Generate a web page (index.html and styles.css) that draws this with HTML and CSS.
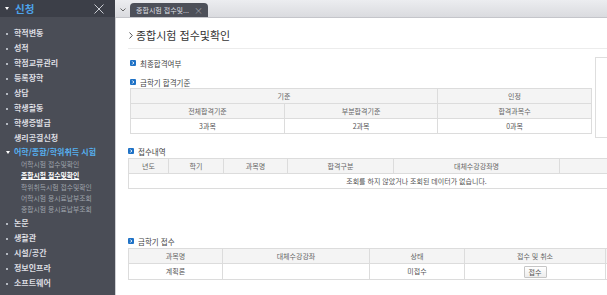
FILE: index.html
```html
<!DOCTYPE html>
<html lang="ko">
<head>
  <meta charset="UTF-8">
  <meta name="viewport" content="width=device-width, initial-scale=1.0">
  <title>종합시험 접수및확인</title>
  <link rel="stylesheet" href="styles.css">
</head>
<body>

<div class="layout">

  <!-- Left menu -->
  <aside class="sidebar">
    <div class="side-head">
      <span class="head-mark"></span>
      <span class="head-title">신청</span>
      <svg class="head-close" width="10" height="10" viewBox="0 0 10 10">
        <path d="M0.5 0.5 L9.5 9.5 M9.5 0.5 L0.5 9.5" stroke="#c9ccd2" stroke-width="1" fill="none"/>
      </svg>
    </div>
    <ul class="menu">
      <li class="menu-item">학적변동</li>
      <li class="menu-item">성적</li>
      <li class="menu-item">학점교류관리</li>
      <li class="menu-item">등록장학</li>
      <li class="menu-item">상담</li>
      <li class="menu-item">학생활동</li>
      <li class="menu-item">학생증발급</li>
      <li class="menu-item no-dot">생리공결신청</li>
      <li class="menu-item open">어학/종합/학위취득 시험</li>
      <li class="sub-item">어학시험 접수및확인</li>
      <li class="sub-item current">종합시험 접수및확인</li>
      <li class="sub-item">학위취득시험 접수및확인</li>
      <li class="sub-item">어학시험 응시료납부조회</li>
      <li class="sub-item">종합시험 응시료납부조회</li>
      <li class="menu-item">논문</li>
      <li class="menu-item">생활관</li>
      <li class="menu-item">시설/공간</li>
      <li class="menu-item">정보인프라</li>
      <li class="menu-item">소프트웨어</li>
    </ul>
  </aside>

  <main class="main">
    <!-- Tab bar -->
    <div class="tabbar">
      <svg class="tab-toggle" width="6" height="4" viewBox="0 0 6 4">
        <path d="M0.5 0.5 L3 3 L5.5 0.5" stroke="#666" stroke-width="1" fill="none"/>
      </svg>
      <div class="tab">
        <span class="tab-text">종합시험 접수및...</span>
        <span class="tab-close">×</span>
      </div>
    </div>

    <div class="content">
      <h2 class="page-title">
        <svg class="title-arrow" width="4" height="7" viewBox="0 0 4 7">
          <path d="M0.5 0.5 L3.3 3.5 L0.5 6.5" stroke="#555" stroke-width="1" fill="none"/>
        </svg>
        종합시험 접수및확인
      </h2>

      <!-- Summary -->
      <div class="summary">
        <div class="summary-main">
          <div class="sec-title first">
            <span class="sec-icon"><svg width="6" height="6" viewBox="0 0 6 6"><path d="M2.3 1.5 L3.8 3 L2.3 4.5" stroke="#fff" stroke-width="1" fill="none"/></svg></span>
            최종합격여부
          </div>
          <div class="sec-title">
            <span class="sec-icon"><svg width="6" height="6" viewBox="0 0 6 6"><path d="M2.3 1.5 L3.8 3 L2.3 4.5" stroke="#fff" stroke-width="1" fill="none"/></svg></span>
            금학기 합격기준
          </div>
          <table class="grid grid-criteria">
            <colgroup><col style="width:154px"><col style="width:153px"><col style="width:154px"></colgroup>
            <tr><th colspan="2">기준</th><th>인정</th></tr>
            <tr><th>전체합격기준</th><th>부분합격기준</th><th>합격과목수</th></tr>
            <tr><td>3과목</td><td>2과목</td><td>0과목</td></tr>
          </table>
        </div>
        <div class="photo-box"></div>
      </div>

      <!-- Receipt history -->
      <div class="section history">
        <div class="sec-title">
          <span class="sec-icon"><svg width="6" height="6" viewBox="0 0 6 6"><path d="M2.3 1.5 L3.8 3 L2.3 4.5" stroke="#fff" stroke-width="1" fill="none"/></svg></span>
          접수내역
        </div>
        <table class="grid grid-wide">
          <colgroup>
            <col style="width:40px"><col style="width:55px"><col style="width:64px">
            <col style="width:106px"><col style="width:166px"><col style="width:145px">
          </colgroup>
          <tr><th>년도</th><th>학기</th><th>과목명</th><th>합격구분</th><th>대체수강강좌명</th><th></th></tr>
          <tr><td colspan="6">조회를 하지 않았거나 조회된 데이터가 없습니다.</td></tr>
        </table>
      </div>

      <!-- Apply this semester -->
      <div class="section apply">
        <div class="sec-title">
          <span class="sec-icon"><svg width="6" height="6" viewBox="0 0 6 6"><path d="M2.3 1.5 L3.8 3 L2.3 4.5" stroke="#fff" stroke-width="1" fill="none"/></svg></span>
          금학기 접수
        </div>
        <table class="grid grid-wide">
          <colgroup>
            <col style="width:94px"><col style="width:147px"><col style="width:95px">
            <col style="width:141px"><col style="width:99px">
          </colgroup>
          <tr><th>과목명</th><th>대체수강강좌</th><th>상태</th><th>접수 및 취소</th><th></th></tr>
          <tr class="row-apply"><td>계획론</td><td></td><td>미접수</td><td><button class="btn">접수</button></td><td></td></tr>
        </table>
      </div>
    </div>
  </main>

</div>

</body>
</html>
```

FILE: styles.css
```css
body {
  margin: 0;
  width: 607px;
  height: 295px;
  overflow: hidden;
  font-family: "Noto Sans CJK KR", "Noto Sans", sans-serif;
  background-color: #fff;
}
.layout {
  display: flex;
  height: 295px;
}

/* Sidebar */
.sidebar {
  width: 115px;
  flex: none;
  background-color: #4a4d56;
}
.side-head {
  height: 17px;
  background-color: #3c3f48;
  display: flex;
  align-items: center;
  padding-left: 5px;
}
.head-mark {
  width: 0;
  height: 0;
  border-left: 2px solid transparent;
  border-right: 2px solid transparent;
  border-top: 3px solid #fff;
  margin-right: 6px;
}
.head-title {
  font-size: 10.5px;
  font-weight: bold;
  color: #4da3ea;
  line-height: 17px;
}
.head-close {
  margin-left: auto;
  margin-right: 11px;
}
.menu {
  list-style: none;
  margin: 0;
  padding: 8px 0 0;
}
.menu-item {
  height: 15px;
  line-height: 15px;
  font-size: 8px;
  font-weight: bold;
  color: #dddee2;
  padding-left: 6px;
  white-space: nowrap;
}
.menu-item::before {
  content: "";
  display: inline-block;
  width: 2px;
  height: 2px;
  background-color: #b4b8c0;
  margin-right: 6px;
  vertical-align: middle;
}
.menu-item.no-dot {
  padding-left: 14px;
}
.menu-item.no-dot::before {
  display: none;
}
.menu-item.open {
  height: 14px;
  line-height: 14px;
  color: #56b0f0;
}
.menu-item.open::before {
  width: 0;
  height: 0;
  background: none;
  border-left: 2px solid transparent;
  border-right: 2px solid transparent;
  border-top: 3px solid #fff;
  margin-right: 4px;
}
.sub-item {
  height: 11.25px;
  line-height: 11.25px;
  font-size: 6.8px;
  color: #9ea2aa;
  padding-left: 21px;
  white-space: nowrap;
}
.sub-item.current {
  color: #fff;
  font-weight: bold;
  text-decoration: underline;
}

/* Main */
.main {
  flex: 1;
  min-width: 0;
  overflow: hidden;
  display: flex;
  flex-direction: column;
}
.tabbar {
  height: 17px;
  flex: none;
  background: linear-gradient(#ecedf0, #dadbdf);
  border-bottom: 1px solid #c4c5ca;
  display: flex;
  align-items: flex-end;
  padding-left: 5px;
}
.tab-toggle {
  align-self: center;
  margin-right: 4px;
  margin-top: 3px;
}
.tab {
  width: 78px;
  height: 14px;
  box-sizing: border-box;
  background-color: #4d5059;
  border-radius: 4px 4px 0 0;
  display: flex;
  align-items: center;
  padding: 0 5px 0 6px;
  color: #dcdde0;
  font-size: 7px;
  white-space: nowrap;
}
.tab-close {
  margin-left: auto;
  color: #9a9da5;
  font-size: 9px;
}
.content {
  flex: 1;
  border-left: 1px solid #cfd0d4;
  padding-left: 12px;
}
.page-title {
  margin: 0;
  padding: 10px 0 6px 1px;
  line-height: 14px;
  font-size: 11px;
  font-weight: normal;
  color: #333;
  border-bottom: 1px solid #ececec;
  display: flex;
  align-items: center;
  gap: 3px;
  white-space: nowrap;
}

/* Section titles */
.sec-title {
  display: flex;
  align-items: center;
  gap: 4px;
  height: 12px;
  font-size: 7.5px;
  color: #444;
  white-space: nowrap;
  margin-top: 7px;
  margin-bottom: 1px;
}
.sec-title.first {
  margin-top: 8px;
}
.sec-icon {
  width: 6px;
  height: 6px;
  background-color: #1f72c6;
  border-radius: 1px;
  display: flex;
}
.summary {
  display: flex;
  align-items: flex-start;
  padding-left: 2px;
}
.summary-main {
  width: 461px;
  flex: none;
}
.summary-main .sec-title {
  margin-bottom: 0;
}
.photo-box {
  flex: none;
  width: 40px;
  height: 81px;
  box-sizing: border-box;
  margin-left: 4px;
  margin-top: 8px;
  border: 1px solid #dedede;
}
.apply {
  margin-top: 46px;
}

/* Tables */
.grid {
  border-collapse: collapse;
  table-layout: fixed;
  font-size: 7px;
  color: #555;
  text-align: center;
}
.grid-criteria {
  width: 461px;
}
.grid-wide {
  width: 576px;
}
.grid th, .grid td {
  border: 1px solid #dcdcdc;
  height: 14px;
  line-height: 14px;
  padding: 0;
  white-space: nowrap;
  overflow: hidden;
}
.grid th {
  background-color: #f4f4f4;
  font-weight: normal;
  color: #666;
}
.row-apply td {
  height: 15px;
  line-height: 15px;
}
.btn {
  width: 23px;
  height: 12px;
  padding: 0;
  border: 1px solid #c6c6c6;
  border-radius: 1px;
  background: linear-gradient(#fff, #ededed);
  font-family: inherit;
  font-size: 7px;
  line-height: 10px;
  color: #555;
  vertical-align: middle;
}
```
